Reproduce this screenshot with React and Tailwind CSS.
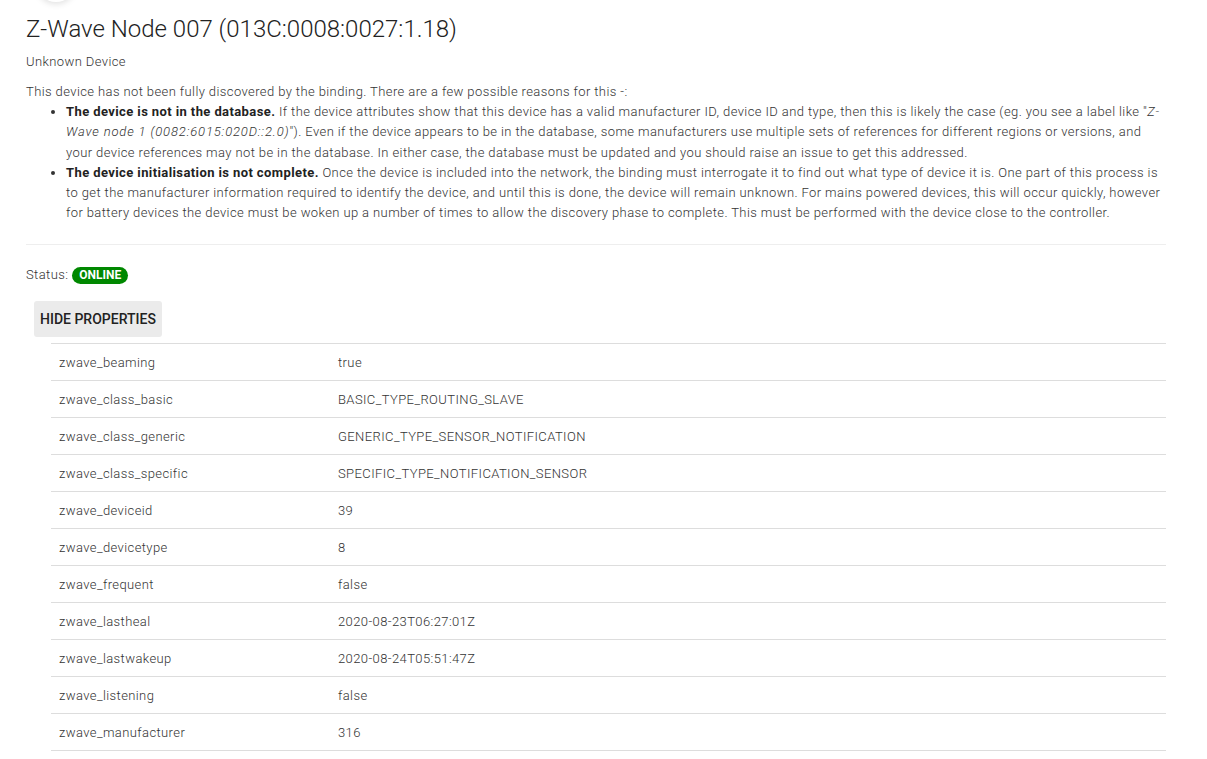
import React from 'react';

const properties = [
    ['zwave_beaming', 'true'],
    ['zwave_class_basic', 'BASIC_TYPE_ROUTING_SLAVE'],
    ['zwave_class_generic', 'GENERIC_TYPE_SENSOR_NOTIFICATION'],
    ['zwave_class_specific', 'SPECIFIC_TYPE_NOTIFICATION_SENSOR'],
    ['zwave_deviceid', '39'],
    ['zwave_devicetype', '8'],
    ['zwave_frequent', 'false'],
    ['zwave_lastheal', '2020-08-23T06:27:01Z'],
    ['zwave_lastwakeup', '2020-08-24T05:51:47Z'],
    ['zwave_listening', 'false'],
    ['zwave_manufacturer', '316'],
];

export default function App() {
    return (
        <div className="h-[759px] overflow-hidden bg-white font-['Roboto',sans-serif] text-[13px] font-light text-[#333] tracking-[0.4px] relative">
            {/* schaduw van de zwevende knop boven de pagina */}
            <div className="absolute left-[36px] -top-[46px] w-[40px] h-[48px] rounded-full bg-white shadow-[0_2px_6px_rgba(0,0,0,0.12)]"></div>

            <div className="pl-[26px] pr-[41px] pt-[14px]">
                <h1 className="text-[24px] font-light text-[#222] leading-[30px] tracking-normal">
                    Z-Wave Node 007 (013C:0008:0027:1.18)
                </h1>
                <p className="mt-[9px] leading-[18px]">Unknown Device</p>

                <div className="mt-[11px] leading-[20.2px]">
                    <p>This device has not been fully discovered by the binding. There are a few possible reasons for this -:</p>
                    <ul className="list-disc pl-[40px]">
                        <li>
                            <b className="font-bold text-[#222]">The device is not in the database.</b> If the device attributes show that this device has a valid manufacturer ID, device ID and type, then this is likely the case (eg. you see a label like "<i className="tracking-[0.85px]">Z-Wave node 1 (0082:6015:020D::2.0)</i>"). Even if the device appears to be in the database, some manufacturers use multiple sets of references for different regions or versions, and your device references may not be in the database. In either case, the database must be updated and you should raise an issue to get this addressed.
                        </li>
                        <li>
                            <b className="font-bold text-[#222]">The device initialisation is not complete.</b> Once the device is included into the network, the binding must interrogate it to find out what type of device it is. One part of this process is to get the manufacturer information required to identify the device, and until this is done, the device will remain unknown. For mains powered devices, this will occur quickly, however for battery devices the device must be woken up a number of times to allow the discovery phase to complete. This must be performed with the device close to the controller.
                        </li>
                    </ul>
                </div>

                <hr className="mt-[21px] border-t border-[#eeeeee]" />

                <div className="mt-[21px] flex items-center gap-[4px] leading-[18px]">
                    <span>Status:</span>
                    <span className="rounded-full bg-[#008800] px-[7px] text-[12px] font-bold leading-[17px] text-white tracking-normal">ONLINE</span>
                </div>

                <div className="pl-[8px] mt-[17px]">
                    <button className="h-[36px] rounded-[3px] bg-[#ebebeb] px-[6px] text-[14px] font-medium text-[#222] tracking-normal">
                        HIDE PROPERTIES
                    </button>
                </div>

                <div className="pl-[25px] mt-[6px]">
                    <table className="w-full border-collapse">
                        <tbody>
                            {properties.map(([key, value]) => (
                                <tr key={key} className="border-y border-[#dddddd] h-[37px]">
                                    <td className="w-[287px] pl-[8px]">{key}</td>
                                    <td>{value}</td>
                                </tr>
                            ))}
                        </tbody>
                    </table>
                </div>
            </div>
        </div>
    );
}
